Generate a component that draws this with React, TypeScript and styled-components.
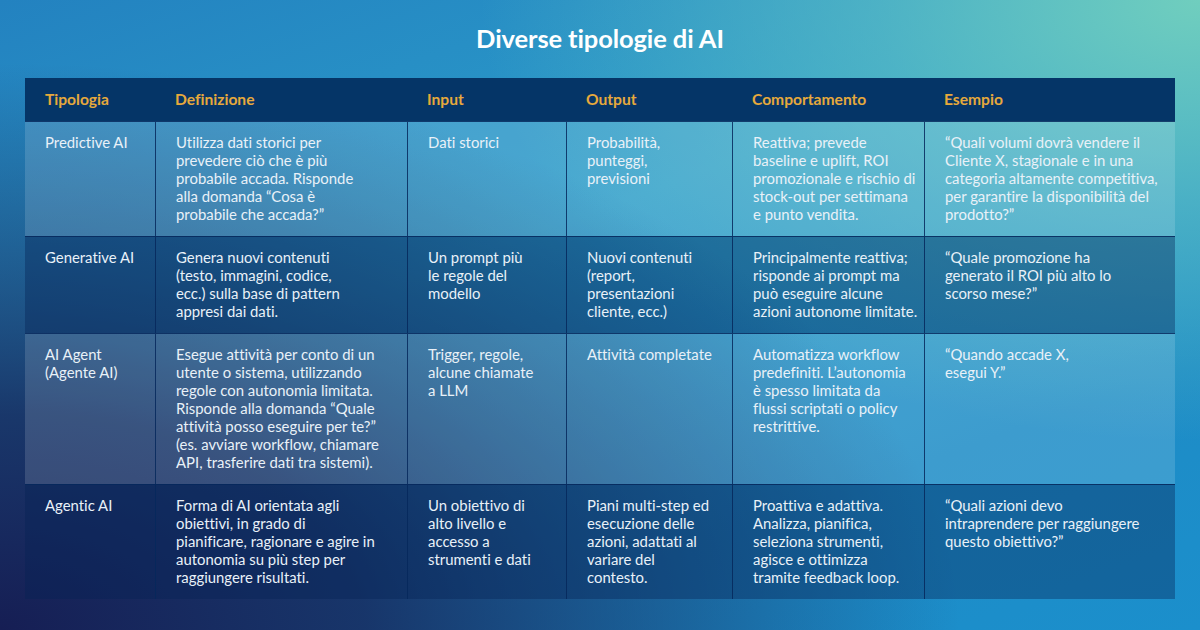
import React from 'react';
import styled, {createGlobalStyle} from 'styled-components';

const GlobalStyle = createGlobalStyle`
  html, body {
    margin: 0;
    padding: 0;
  }
  body {
    font-family: Lato, "Open Sans", "Liberation Sans", sans-serif;
    font-variant-ligatures: none;
  }
`;

const Page = styled.div`
  width: 1200px;
  height: 630px;
  box-sizing: border-box;
  padding-top: 22px;
  display: flex;
  flex-direction: column;
  align-items: center;
  overflow: hidden;
  background:
    radial-gradient(ellipse 80% 90% at 0% 100%, rgba(22, 30, 84, 1) 0%, rgba(22, 38, 90, 0.85) 38%, rgba(24, 60, 120, 0) 100%),
    radial-gradient(ellipse 60% 70% at 100% 0%, rgba(112, 206, 190, 1) 0%, rgba(100, 196, 196, 0.6) 45%, rgba(80, 180, 200, 0) 100%),
    linear-gradient(160deg, #2382c0 0%, #2b9cca 40%, #1e8cc6 75%, #1b8fcc 100%);
`;

const Title = styled.h1`
  margin: 0 0 24px;
  font-size: 25.5px;
  line-height: 32px;
  font-weight: 700;
  color: #ffffff;
  letter-spacing: -0.1px;
`;

const Table = styled.div`
  width: 1150px;
  display: grid;
  grid-template-columns: 130px 252px 159px 166px 192px 251px;
`;

const HeadCell = styled.div`
  background: #053567;
  color: #e6a93c;
  font-weight: 700;
  font-size: 15.6px;
  height: 43px;
  box-sizing: border-box;
  padding-bottom: 1px;
  display: flex;
  align-items: center;
  padding-left: 20px;
`;

const Cell = styled.div<{$light: boolean; $first: boolean}>`
  background: ${p => (p.$light ? 'rgba(255, 255, 255, 0.14)' : 'rgba(6, 34, 84, 0.38)')};
  border-top: 1px solid rgba(6, 40, 92, 0.85);
  border-left: ${p => (p.$first ? 'none' : '1px solid rgba(6, 40, 92, 0.85)')};
  padding: 11px 4px 13px 20px;
  color: #e9f1f8;
  font-size: 14.9px;
  line-height: 18px;
  white-space: pre-line;
`;

const headers = ['Tipologia', 'Definizione', 'Input', 'Output', 'Comportamento', 'Esempio'];

const rows: string[][] = [
  [
    'Predictive AI',
    'Utilizza dati storici per\nprevedere ciò che è più\nprobabile accada. Risponde\nalla domanda “Cosa è\nprobabile che accada?”',
    'Dati storici',
    'Probabilità,\npunteggi,\nprevisioni',
    'Reattiva; prevede\nbaseline e uplift, ROI\npromozionale e rischio di\nstock-out per settimana\ne punto vendita.',
    '“Quali volumi dovrà vendere il\nCliente X, stagionale e in una\ncategoria altamente competitiva,\nper garantire la disponibilità del\nprodotto?”',
  ],
  [
    'Generative AI',
    'Genera nuovi contenuti\n(testo, immagini, codice,\necc.) sulla base di pattern\nappresi dai dati.',
    'Un prompt più\nle regole del\nmodello',
    'Nuovi contenuti\n(report,\npresentazioni\ncliente, ecc.)',
    'Principalmente reattiva;\nrisponde ai prompt ma\npuò eseguire alcune\nazioni autonome limitate.',
    '“Quale promozione ha\ngenerato il ROI più alto lo\nscorso mese?”',
  ],
  [
    'AI Agent\n(Agente AI)',
    'Esegue attività per conto di un\nutente o sistema, utilizzando\nregole con autonomia limitata.\nRisponde alla domanda “Quale\nattività posso eseguire per te?”\n(es. avviare workflow, chiamare\nAPI, trasferire dati tra sistemi).',
    'Trigger, regole,\nalcune chiamate\na LLM',
    'Attività completate',
    'Automatizza workflow\npredefiniti. L’autonomia\nè spesso limitata da\nflussi scriptati o policy\nrestrittive.',
    '“Quando accade X,\nesegui Y.”',
  ],
  [
    'Agentic AI',
    'Forma di AI orientata agli\nobiettivi, in grado di\npianificare, ragionare e agire in\nautonomia su più step per\nraggiungere risultati.',
    'Un obiettivo di\nalto livello e\naccesso a\nstrumenti e dati',
    'Piani multi-step ed\nesecuzione delle\nazioni, adattati al\nvariare del\ncontesto.',
    'Proattiva e adattiva.\nAnalizza, pianifica,\nseleziona strumenti,\nagisce e ottimizza\ntramite feedback loop.',
    '“Quali azioni devo\nintraprendere per raggiungere\nquesto obiettivo?”',
  ],
];

function App() {
  return (
    <Page>
      <GlobalStyle />
      <Title>Diverse tipologie di AI</Title>
      <Table>
        {headers.map(h => (
          <HeadCell key={h}>{h}</HeadCell>
        ))}
        {rows.map((row, r) =>
          row.map((text, c) => (
            <Cell key={`${r}-${c}`} $light={r % 2 === 0} $first={c === 0}>
              {text}
            </Cell>
          ))
        )}
      </Table>
    </Page>
  );
}

export default App;
